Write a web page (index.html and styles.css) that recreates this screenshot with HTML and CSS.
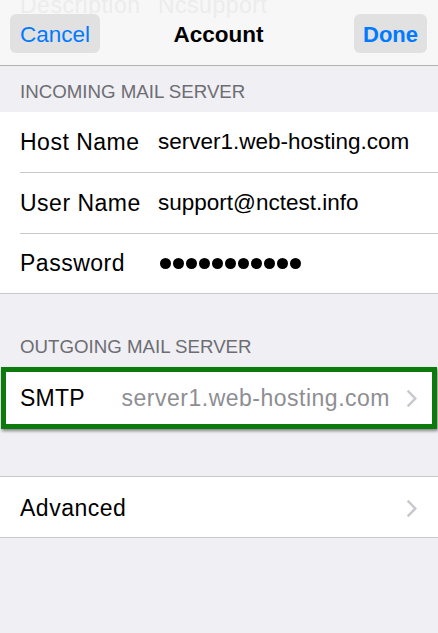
FILE: index.html
```html
<!DOCTYPE html>
<html>
<head>
<meta charset="utf-8">
<link rel="stylesheet" href="styles.css">
</head>
<body>
<div class="nav">
  <div class="ghost"><span class="ghost-label">Description</span><span>Ncsupport</span></div>
  <div class="bar">
    <button class="btn btn-cancel">Cancel</button>
    <div class="title">Account</div>
    <button class="btn btn-done">Done</button>
  </div>
</div>

<div class="header header-first">INCOMING MAIL SERVER</div>
<div class="group">
  <div class="row"><div class="cell"><span class="label">Host Name</span><span class="value">server1.web-hosting.com</span></div></div>
  <div class="row"><div class="cell"><span class="label">User Name</span><span class="value">support@nctest.info</span></div></div>
  <div class="row"><div class="cell last"><span class="label">Password</span><span class="dots"><i></i><i></i><i></i><i></i><i></i><i></i><i></i><i></i><i></i><i></i><i></i></span></div></div>
</div>

<div class="header header-second">OUTGOING MAIL SERVER</div>
<div class="smtp">
  <span class="label smtp-label">SMTP</span>
  <span class="detail">server1.web-hosting.com</span>
  <svg class="chev" width="10" height="17" viewBox="0 0 10 17"><path d="M1.5 1.5 L8.3 8.5 L1.5 15.5" fill="none" stroke="#c7c7cc" stroke-width="2.4" stroke-linecap="square"/></svg>
</div>

<div class="group group-adv">
  <div class="adv">
    <span class="label">Advanced</span>
    <svg class="chev" width="10" height="17" viewBox="0 0 10 17"><path d="M1.5 1.5 L8.3 8.5 L1.5 15.5" fill="none" stroke="#c7c7cc" stroke-width="2.4" stroke-linecap="square"/></svg>
  </div>
</div>
</body>
</html>
```
FILE: styles.css
```css
* { box-sizing: border-box; }
html, body { margin: 0; padding: 0; }
body {
  background: #efeff4;
  font-family: "Liberation Sans", Arial, sans-serif;
  width: 438px;
  height: 633px;
  overflow: hidden;
}
.nav {
  background: #f7f7f7;
  border-bottom: 1px solid #b2b2b2;
  height: 66px;
}
.ghost {
  height: 10px;
  line-height: 10px;
  font-size: 23px;
  letter-spacing: 0.5px;
  color: #ececec;
  padding-left: 20px;
  white-space: nowrap;
  overflow: visible;
}
.ghost-label { display: inline-block; width: 138px; }
.bar {
  margin-top: 4px;
  display: grid;
  grid-template-columns: 1fr auto 1fr;
  align-items: center;
  padding: 0 11px 0 10px;
  height: 39px;
}
.btn {
  height: 39px;
  border: 0;
  border-radius: 6px;
  background: #e1e1e1;
  color: #007aff;
  font-family: "Liberation Sans", Arial, sans-serif;
  font-size: 22.5px;
  padding: 2px 0 0;
  margin: 0;
}
.btn-cancel { width: 90px; justify-self: start; }
.btn-done { width: 73px; justify-self: end; font-weight: bold; font-size: 22px; }
.title {
  font-weight: bold;
  font-size: 22.5px;
  color: #000;
  padding-top: 2px;
}
.header {
  color: #6d6d72;
  font-size: 18.7px;
  line-height: 22px;
  padding: 0 20px 9px;
}
.header-first { padding-top: 15px; }
.header-second { padding-top: 42px; }
.group {
  background: #fff;
  border-bottom: 1px solid #c8c7cc;
}
.row { padding-left: 20px; }
.cell {
  height: 61px;
  display: flex;
  align-items: center;
  border-bottom: 1px solid #c8c7cc;
}
.cell.last { border-bottom: 0; height: 59px; }
.label {
  font-size: 23px;
  letter-spacing: 0.5px;
  color: #000;
  width: 138px;
  flex: none;
}
.value {
  font-size: 22.5px;
  color: #000;
}
.dots { display: flex; gap: 2px; padding-left: 2px; }
.dots i {
  display: block;
  width: 11px;
  height: 11px;
  border-radius: 50%;
  background: #000;
}
.smtp {
  margin: 0 1px 0 1px;
  height: 62px;
  background: #fff;
  border: 5px solid #0c7a0c;
  box-shadow: 1px 2px 3px rgba(0,0,0,0.45);
  display: flex;
  align-items: center;
  padding: 0 15px 0 14px;
}
.smtp-label { width: auto; flex: 1; letter-spacing: 0.2px; }
.detail {
  font-size: 23px;
  letter-spacing: 0.5px;
  color: #8e8e93;
  margin-right: 17px;
}
.chev { display: block; flex: none; }
.group-adv {
  margin-top: 47px;
  border-top: 1px solid #c8c7cc;
}
.adv {
  height: 60px;
  display: flex;
  align-items: center;
  padding: 2px 21px 0 20px;
}
.adv .label { flex: 1; }
```
